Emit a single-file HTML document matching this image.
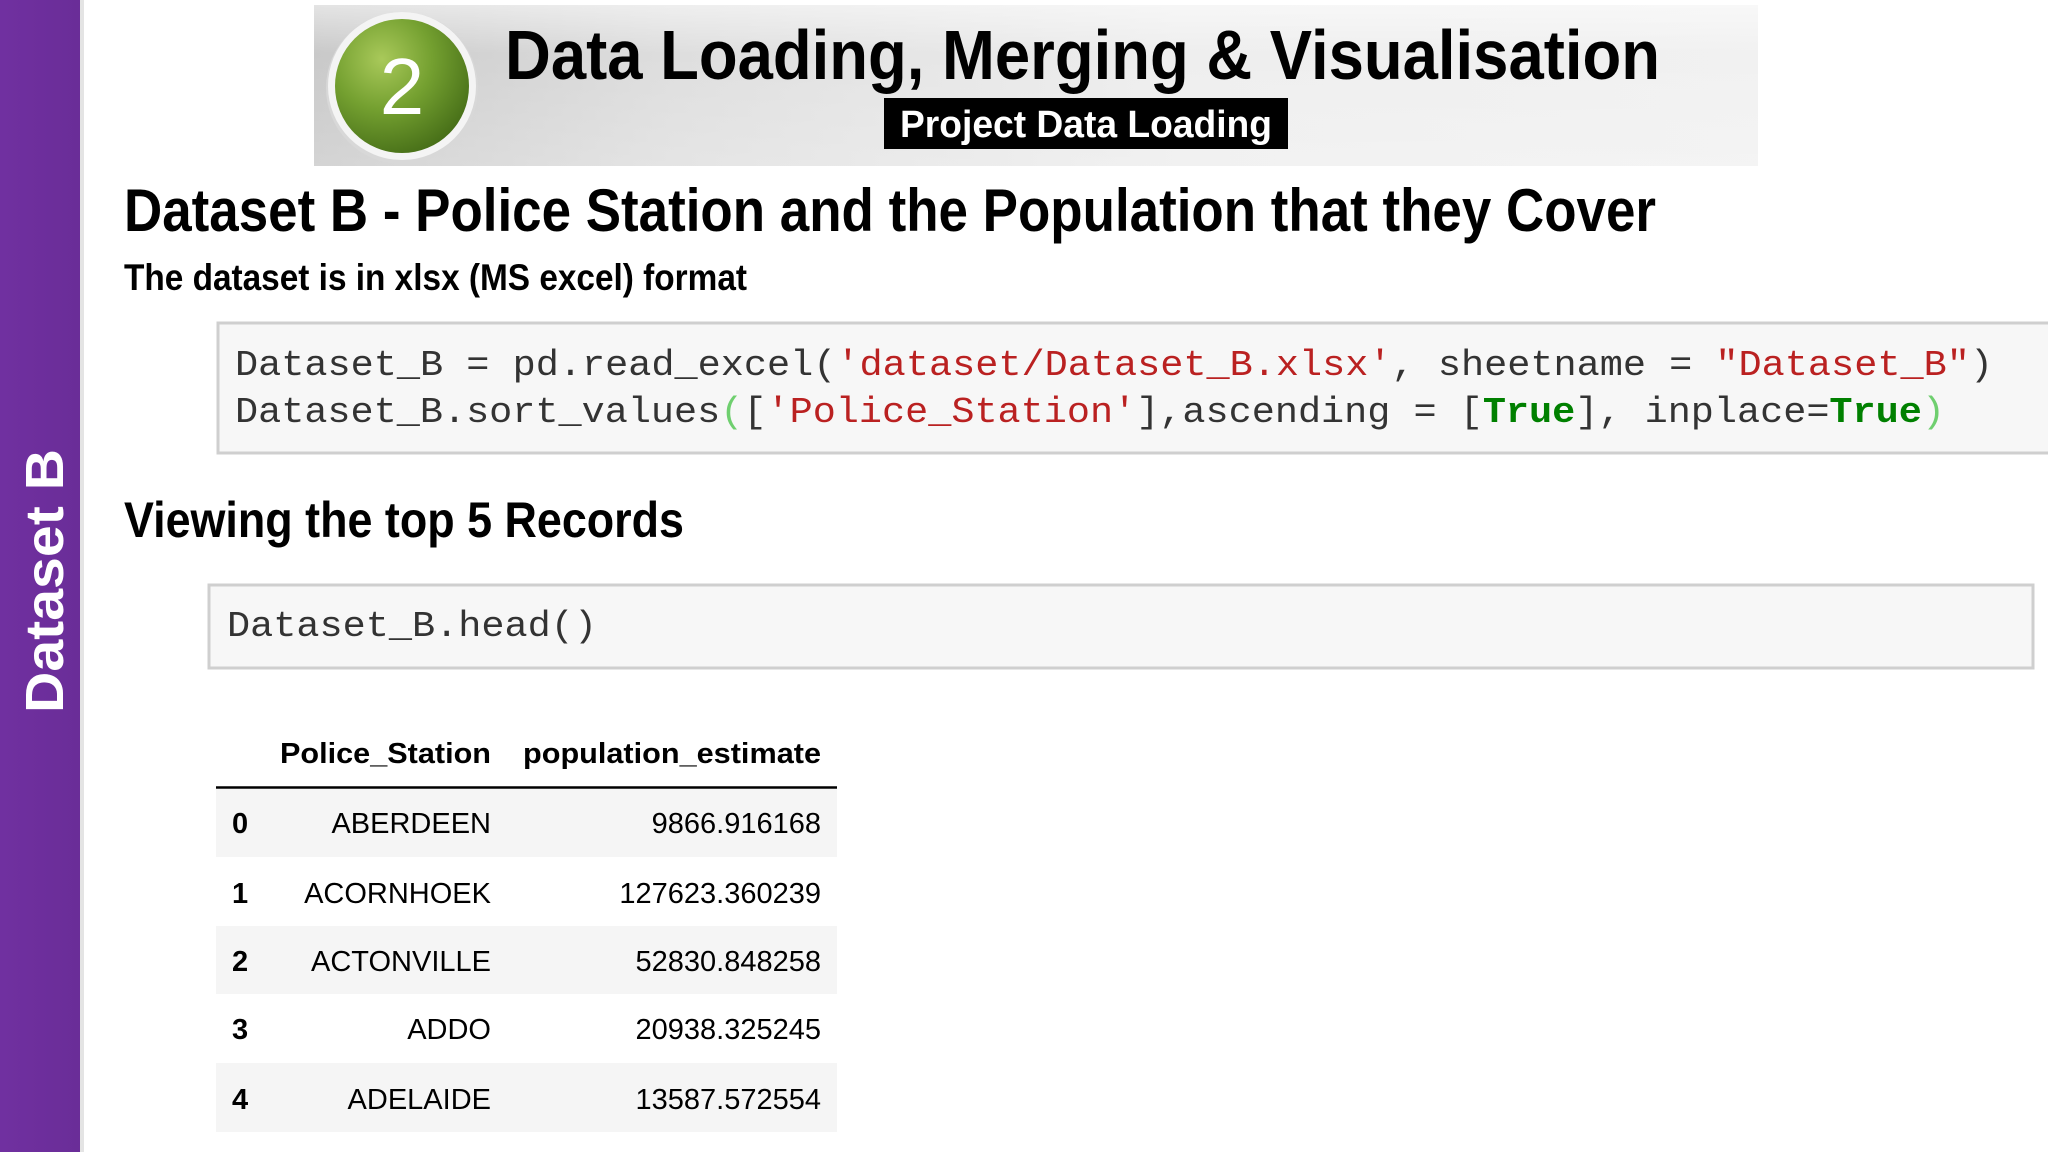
<!DOCTYPE html>
<html><head><meta charset="utf-8"><style>
html,body{margin:0;padding:0;background:#fff;}
body{width:2048px;height:1152px;position:relative;overflow:hidden;}
</style></head><body>
<svg width="2048" height="1152" viewBox="0 0 2048 1152" xmlns="http://www.w3.org/2000/svg" style="position:absolute;left:0;top:0">
<defs>
<linearGradient id="ban" x1="0" y1="0" x2="1" y2="0">
<stop offset="0" stop-color="#c9c9c9"/><stop offset="0.25" stop-color="#dedede"/><stop offset="0.6" stop-color="#eeeeee"/><stop offset="1" stop-color="#f1f1f1"/>
</linearGradient>
<linearGradient id="banv" x1="0" y1="0" x2="0" y2="1">
<stop offset="0" stop-color="#fff" stop-opacity="0.5"/><stop offset="0.3" stop-color="#fff" stop-opacity="0"/><stop offset="1" stop-color="#fff" stop-opacity="0.2"/>
</linearGradient>
<radialGradient id="grn" cx="0.35" cy="0.3" r="0.75">
<stop offset="0" stop-color="#a9c95a"/><stop offset="0.5" stop-color="#74a030"/><stop offset="1" stop-color="#476f18"/>
</radialGradient>
<linearGradient id="side" x1="0" y1="0" x2="1" y2="0">
<stop offset="0" stop-color="#7030a0"/><stop offset="1" stop-color="#6a2d98"/>
</linearGradient>
</defs>
<!-- sidebar -->
<rect x="0" y="0" width="80" height="1152" fill="url(#side)"/>
<rect x="80" y="0" width="4" height="1152" fill="#e4e4e4"/>
<text transform="translate(63,713) rotate(-90)" font-family="Liberation Sans, sans-serif" font-weight="bold" font-size="54" fill="#fff" textLength="264" lengthAdjust="spacingAndGlyphs">Dataset  B</text>
<!-- banner -->
<rect x="314" y="5" width="1444" height="161" fill="url(#ban)"/>
<rect x="314" y="5" width="1444" height="161" fill="url(#banv)"/>
<circle cx="402" cy="88" r="76" fill="#d8d8d8"/>
<circle cx="402" cy="86" r="74" fill="#f4f4f4"/>
<circle cx="402" cy="86" r="67" fill="url(#grn)"/>
<text x="402" y="114" text-anchor="middle" font-family="Liberation Sans, sans-serif" font-size="80" fill="#fff">2</text>
<text x="505" y="79" font-family="Liberation Sans, sans-serif" font-weight="bold" font-size="70" fill="#000" textLength="1155" lengthAdjust="spacingAndGlyphs">Data Loading, Merging &amp; Visualisation</text>
<rect x="884" y="98" width="404" height="51" fill="#000"/>
<text x="900" y="137" font-family="Liberation Sans, sans-serif" font-weight="bold" font-size="38" fill="#fff" textLength="372" lengthAdjust="spacingAndGlyphs">Project Data Loading</text>
<!-- headings -->
<text x="124" y="231" font-family="Liberation Sans, sans-serif" font-weight="bold" font-size="60" fill="#000" textLength="1532" lengthAdjust="spacingAndGlyphs">Dataset B -  Police Station and the Population that they Cover</text>
<text x="124" y="290" font-family="Liberation Sans, sans-serif" font-weight="bold" font-size="37" fill="#000" textLength="623" lengthAdjust="spacingAndGlyphs">The dataset is in xlsx (MS excel) format</text>
<text x="124" y="537" font-family="Liberation Sans, sans-serif" font-weight="bold" font-size="50" fill="#000" textLength="560" lengthAdjust="spacingAndGlyphs">Viewing the top 5 Records</text>
<!-- code cell 1 -->
<rect x="218" y="323" width="1832" height="130" fill="#f7f7f7" stroke="#cfcfcf" stroke-width="3"/>
<g font-family="Liberation Mono, monospace" font-size="36" fill="#333">
<text x="235" y="375" textLength="1758" lengthAdjust="spacingAndGlyphs">Dataset_B = pd.read_excel(<tspan fill="#ba2121">'dataset/Dataset_B.xlsx'</tspan>, sheetname = <tspan fill="#ba2121">"Dataset_B"</tspan>)</text>
<text x="235" y="422" textLength="1710" lengthAdjust="spacingAndGlyphs">Dataset_B.sort_values<tspan fill="#6fcf6f">(</tspan>[<tspan fill="#ba2121">'Police_Station'</tspan>],ascending = [<tspan fill="#008000" font-weight="bold">True</tspan>], inplace=<tspan fill="#008000" font-weight="bold">True</tspan><tspan fill="#6fcf6f">)</tspan></text>
</g>
<!-- code cell 2 -->
<rect x="209" y="585" width="1824" height="83" fill="#f7f7f7" stroke="#cfcfcf" stroke-width="3"/>
<text x="227" y="636" font-family="Liberation Mono, monospace" font-size="36" fill="#333" textLength="370" lengthAdjust="spacingAndGlyphs">Dataset_B.head()</text>
<!-- table -->
<rect x="216" y="789" width="621" height="68" fill="#f5f5f5"/>
<rect x="216" y="926" width="621" height="68" fill="#f5f5f5"/>
<rect x="216" y="1063" width="621" height="69" fill="#f5f5f5"/>
<line x1="216" y1="787.5" x2="837" y2="787.5" stroke="#000" stroke-width="2.5"/>
<g font-family="Liberation Sans, sans-serif" font-size="29" fill="#000">
<g font-weight="bold" text-anchor="end">
<text x="491" y="763" textLength="211" lengthAdjust="spacingAndGlyphs">Police_Station</text>
<text x="821" y="763" textLength="298" lengthAdjust="spacingAndGlyphs">population_estimate</text>
</g>
<g font-weight="bold">
<text x="232" y="833">0</text><text x="232" y="903">1</text><text x="232" y="971">2</text><text x="232" y="1039">3</text><text x="232" y="1109">4</text>
</g>
<g text-anchor="end">
<text x="491" y="833">ABERDEEN</text><text x="821" y="833">9866.916168</text>
<text x="491" y="903">ACORNHOEK</text><text x="821" y="903">127623.360239</text>
<text x="491" y="971">ACTONVILLE</text><text x="821" y="971">52830.848258</text>
<text x="491" y="1039">ADDO</text><text x="821" y="1039">20938.325245</text>
<text x="491" y="1109">ADELAIDE</text><text x="821" y="1109">13587.572554</text>
</g>
</g>
</svg>
</body></html>
